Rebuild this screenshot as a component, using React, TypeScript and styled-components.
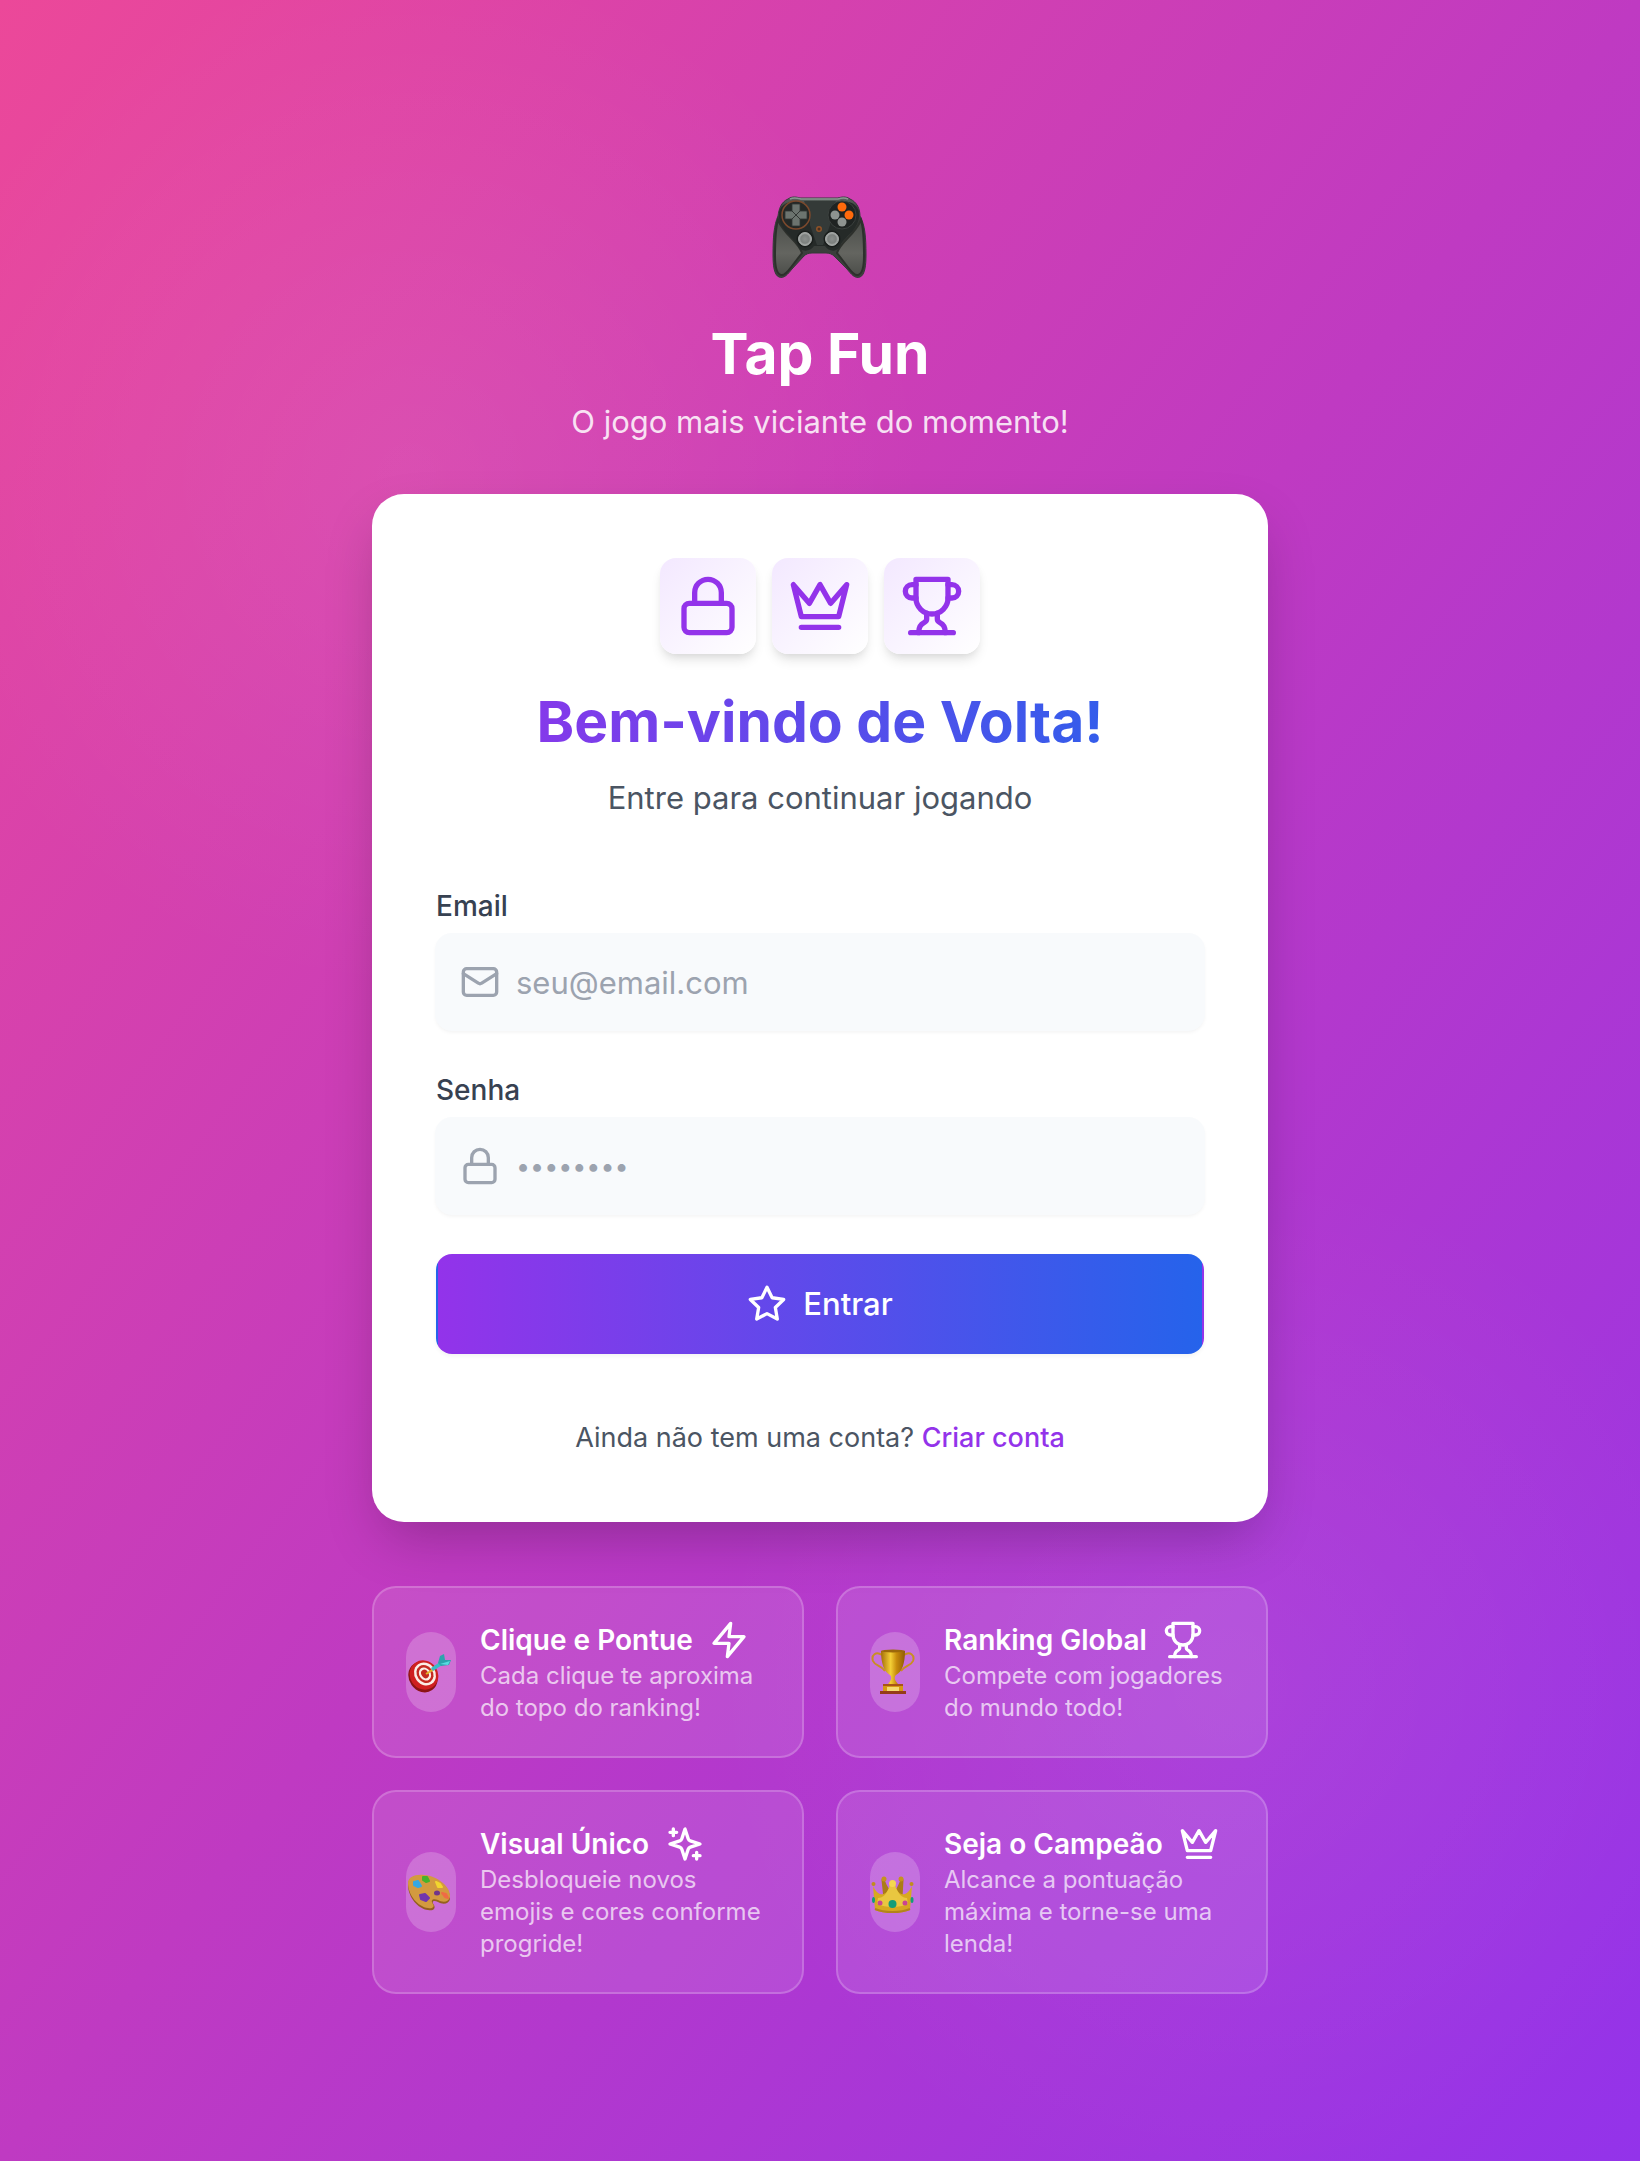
import React from "react";
import styled, { createGlobalStyle } from "styled-components";

const GlobalStyle = createGlobalStyle`
  *, *::before, *::after { box-sizing: border-box; }
  body { margin: 0; font-family: Inter, "Liberation Sans", sans-serif; }
  h1, h2, h3, p { margin: 0; }
`;

const Page = styled.main`
  min-height: 100vh;
  display: flex;
  align-items: center;
  justify-content: center;
  padding: 32px;
  background:
    radial-gradient(circle at 25% 22%, rgba(255, 255, 255, 0.07), transparent 520px),
    radial-gradient(circle at 75% 78%, rgba(255, 255, 255, 0.06), transparent 520px),
    linear-gradient(to bottom right, #ec4899, #bf3ac2 50%, #9333ea);
`;

const Column = styled.div`
  width: 100%;
  max-width: 896px;
`;

const Header = styled.header`
  display: flex;
  flex-direction: column;
  align-items: center;
  text-align: center;
  margin-bottom: 48px;
`;

const Mascot = styled.div`
  height: 135px;
  margin-bottom: 16px;
  padding-top: 4px;
  display: flex;
  align-items: center;
`;

const AppName = styled.h1`
  font-size: 57px;
  line-height: 72px;
  font-weight: 700;
  color: #fff;
  margin-bottom: 8px;
`;

const Tagline = styled.p`
  font-size: 31px;
  line-height: 48px;
  color: rgba(255, 255, 255, 0.85);
`;

const Card = styled.section`
  background: #fff;
  border-radius: 32px;
  padding: 64px;
  box-shadow: 0 24px 56px -12px rgba(0, 0, 0, 0.25);
`;

const CardHead = styled.div`
  display: flex;
  flex-direction: column;
  align-items: center;
  text-align: center;
  margin-bottom: 64px;
`;

const TileRow = styled.div`
  display: flex;
  gap: 16px;
  margin-bottom: 32px;
`;

const Tile = styled.div`
  padding: 16px;
  border-radius: 16px;
  line-height: 0;
  color: #9333ea;
  background: linear-gradient(to bottom right, #f3e8ff, #fff);
  box-shadow: 0 8px 12px -2px rgba(0, 0, 0, 0.1), 0 4px 8px -4px rgba(0, 0, 0, 0.1);
`;

const Welcome = styled.h2`
  font-size: 57px;
  line-height: 72px;
  font-weight: 700;
  color: transparent;
  width: 100%;
  background: linear-gradient(to right, #9333ea, #2563eb);
  background-clip: text;
  -webkit-background-clip: text;
  margin-bottom: 16px;
`;

const Lead = styled.p`
  font-size: 31px;
  line-height: 48px;
  color: #4b5563;
`;

const Form = styled.form`
  display: flex;
  flex-direction: column;
  gap: 40px;
`;

const Field = styled.div`
  display: flex;
  flex-direction: column;
  gap: 8px;
`;

const Label = styled.label`
  font-size: 28px;
  line-height: 40px;
  font-weight: 500;
  color: #374151;
`;

const InputBox = styled.div`
  height: 96px;
  display: flex;
  align-items: center;
  gap: 16px;
  padding: 0 24px;
  border-radius: 16px;
  color: #9ca3af;
  background: #f8fafc;
  box-shadow: 0 0 0 1px #f8fafc, 0 2px 4px rgba(0, 0, 0, 0.06);
`;

const Input = styled.input`
  flex: 1;
  min-width: 0;
  height: 100%;
  padding: 0;
  border: 0;
  outline: 0;
  background: transparent;
  font: 400 31px/48px Inter, "Liberation Sans", sans-serif;
  color: #111827;
  &::placeholder { color: #9ca3af; opacity: 1; }
  &[type="password"] { font-size: 25px; }
`;

const Submit = styled.button`
  height: 100px;
  display: flex;
  align-items: center;
  justify-content: center;
  gap: 16px;
  border: 2px solid transparent;
  border-radius: 16px;
  font: 500 31px/48px Inter, "Liberation Sans", sans-serif;
  color: #fff;
  cursor: pointer;
  background: linear-gradient(to right, #9333ea, #2563eb);
  box-shadow: 0 2px 4px rgba(0, 0, 0, 0.05);
`;

const SignUp = styled.p`
  margin-top: 64px;
  text-align: center;
  font-size: 27px;
  line-height: 40px;
  color: #4b5563;
`;

const SignUpLink = styled.a`
  font-weight: 500;
  color: #9333ea;
  text-decoration: none;
`;

const Features = styled.section`
  margin-top: 64px;
  display: grid;
  grid-template-columns: repeat(2, minmax(0, 1fr));
  gap: 32px;
`;

const Feature = styled.article`
  display: flex;
  align-items: center;
  gap: 24px;
  padding: 32px;
  border: 2px solid rgba(255, 255, 255, 0.2);
  border-radius: 24px;
  background: rgba(255, 255, 255, 0.1);
`;

const Pill = styled.div`
  flex: none;
  width: 50px;
  height: 80px;
  padding-right: 4px;
  border-radius: 25px;
  display: flex;
  align-items: center;
  justify-content: center;
  background: rgba(255, 255, 255, 0.2);
`;

const FeatureText = styled.div`
  flex: 1;
  min-width: 0;
`;

const FeatureTitle = styled.h3`
  display: flex;
  align-items: center;
  gap: 16px;
  font-size: 28px;
  line-height: 40px;
  font-weight: 600;
  white-space: nowrap;
  color: #fff;
`;

const FeatureBody = styled.p`
  font-size: 24px;
  line-height: 32px;
  color: rgba(255, 255, 255, 0.7);
`;

const Svg = styled.svg`
  flex: none;
  display: block;
`;

type IconName = "lock" | "crown" | "trophy" | "mail" | "star" | "zap" | "sparkles";

const shapes: Record<IconName, React.ReactNode> = {
  lock: (
    <>
      <rect x="3" y="11" width="18" height="11" rx="2" />
      <path d="M7 11V7a5 5 0 0 1 10 0v4" />
    </>
  ),
  crown: <path d="m2 4 3 12h14l3-12-6 7-4-7-4 7-6-7zm3 16h14" />,
  trophy: (
    <>
      <path d="M6 9H4.500a2.500 2.500 0 0 1 0-5H6" />
      <path d="M18 9h1.500a2.500 2.500 0 0 0 0-5H18" />
      <path d="M4 22h16" />
      <path d="M10 14.660V17c0 .55-.47.98-.97 1.210C7.850 18.750 7 20.240 7 22" />
      <path d="M14 14.660V17c0 .55.47.98.97 1.210C16.150 18.750 17 20.240 17 22" />
      <path d="M18 2H6v7a6 6 0 0 0 12 0V2Z" />
    </>
  ),
  mail: (
    <>
      <rect x="2" y="4" width="20" height="16" rx="2" />
      <path d="m22 7-8.970 5.700a1.940 1.940 0 0 1-2.060 0L2 7" />
    </>
  ),
  star: (
    <polygon points="12 2 15.090 8.260 22 9.270 17 14.140 18.180 21.020 12 17.770 5.820 21.020 7 14.140 2 9.270 8.910 8.260 12 2" />
  ),
  zap: <polygon points="13 2 3 14 12 14 11 22 21 10 12 10 13 2" />,
  sparkles: (
    <>
      <path d="m12 3-1.912 5.813a2 2 0 0 1-1.275 1.275L3 12l5.813 1.912a2 2 0 0 1 1.275 1.275L12 21l1.912-5.813a2 2 0 0 1 1.275-1.275L21 12l-5.813-1.912a2 2 0 0 1-1.275-1.275L12 3Z" />
      <path d="M5 3v4M19 17v4M3 5h4M17 19h4" />
    </>
  ),
};

const Icon = ({ name, size = 40 }: { name: IconName; size?: number }) => (
  <Svg
    width={size}
    height={size}
    viewBox="0 0 24 24"
    fill="none"
    stroke="currentColor"
    strokeWidth={2}
    strokeLinecap="round"
    strokeLinejoin="round"
    aria-hidden="true"
  >
    {shapes[name]}
  </Svg>
);

const Gamepad = () => (
  <Svg width="96" height="84" viewBox="0 0 96 84" role="img" aria-label="Controle">
    <defs>
      <linearGradient id="padBody" x1="0" y1="0" x2="0" y2="1">
        <stop offset="0" stopColor="#5d6561" />
        <stop offset="0.18" stopColor="#343937" />
        <stop offset="1" stopColor="#3f423e" />
      </linearGradient>
      <linearGradient id="padGrip" x1="0" y1="0" x2="0" y2="1">
        <stop offset="0" stopColor="#4a4d49" />
        <stop offset="0.6" stopColor="#646560" />
        <stop offset="1" stopColor="#4c4e4a" />
      </linearGradient>
      <radialGradient id="padStick">
        <stop offset="0" stopColor="#8b8f8d" />
        <stop offset="0.65" stopColor="#7c807e" />
        <stop offset="1" stopColor="#b5b8b6" />
      </radialGradient>
    </defs>
    <path d="M16 4C20 1 25 2 28 3H66C69 2 74 1 78 4C85 7 88 14 88 21C93 30 94 42 94 60C94 70 93 80 88 82C83 84 79 79 75 74L62 61C60 59 57 58 54 58H40C37 58 34 59 32 61L20 74C16 79 12 84 7 82C2 80 1 70 1 60C1 42 2 30 6 21C7 14 9 7 16 4Z" fill="url(#padBody)" stroke="#343a38" />
    <path d="M6 25C3 35 3 48 3 61C3 72 5 79 9 80C13 81 17 75 20 71L30 58C26 46 13 41 6 25Z" fill="url(#padGrip)" stroke="#2d302c" strokeWidth="2" />
    <path d="M89 25C92 35 92 48 92 61C92 72 90 79 86 80C82 81 78 75 75 71L65 58C69 46 82 41 89 25Z" fill="url(#padGrip)" stroke="#2d302c" strokeWidth="2" />
    <path d="M18 4C22 2 25 3 29 4H66C69 3 72 2 76 4" fill="none" stroke="#899690" strokeWidth="1.500" />
    <path d="M7 20C7 34 19 40 25 49C28 58 38 57 42 51H53C57 57 66 58 69 49C75 40 87 34 87 20C87 10 79 6 71 7C64 7 59 12 57 18L38 18C36 12 31 7 24 7C15 6 7 11 7 20Z" fill="#252a28" />
    <path d="M32 6H64L58 20V30L51 50H45L38 30V20Z" fill="#343a38" />
    <circle cx="24" cy="20" r="14" fill="#242826" stroke="#7b492d" strokeWidth="1.500" />
    <path d="M20 9H28V16L24 20L20 16ZM20 31H28V24L24 20L20 24ZM13 16V24H20L24 20L20 16ZM35 16V24H28L24 20L28 16Z" fill="#6c746f" stroke="#303532" strokeWidth="0.800" />
    <circle cx="70" cy="20" r="14" fill="#1f2322" stroke="#3b403e" />
    <circle cx="70" cy="12" r="4.500" fill="#ff6a0c" />
    <circle cx="77" cy="20" r="4.500" fill="#ff6a0c" />
    <circle cx="63" cy="20" r="4.500" fill="#8e9390" />
    <circle cx="70" cy="27" r="4.500" fill="#8e9390" />
    <circle cx="47" cy="34" r="3" fill="#8e5228" />
    <circle cx="47" cy="34" r="1.500" fill="#473021" />
    <circle cx="33" cy="44" r="8.500" fill="#1a1e1c" />
    <circle cx="33" cy="44" r="6.500" fill="url(#padStick)" stroke="#a0a4a2" />
    <circle cx="60" cy="44" r="8.500" fill="#1a1e1c" />
    <circle cx="60" cy="44" r="6.500" fill="url(#padStick)" stroke="#a0a4a2" />
  </Svg>
);

const Dart = () => (
  <Svg width="44" height="44" viewBox="0 -2 44 44" role="img" aria-label="Alvo">
    <ellipse cx="16" cy="25" rx="14" ry="16" transform="rotate(-35 16 25)" fill="#8c1414" />
    <ellipse cx="17" cy="23" rx="14" ry="15" transform="rotate(-35 17 23)" fill="#cf2020" />
    <ellipse cx="18" cy="22" rx="10.500" ry="12" transform="rotate(-35 18 22)" fill="#fbeee6" />
    <ellipse cx="18" cy="22" rx="8" ry="9.500" transform="rotate(-35 18 22)" fill="#c42a20" />
    <ellipse cx="18" cy="22" rx="5.700" ry="7" transform="rotate(-35 18 22)" fill="#fbeee6" />
    <ellipse cx="18" cy="22" rx="3.500" ry="4.500" transform="rotate(-35 18 22)" fill="#c42a20" />
    <path d="M19 22L27 17" stroke="#e3b528" strokeWidth="2" />
    <path d="M24 16L33 10L35 13L26 19Z" fill="#34bec6" />
    <path d="M31 11L33 4L37 2L38 8L44 8L42 13L34 14Z" fill="#2ba4ad" />
    <path d="M33 12L43 9L41 13Z" fill="#56dbe0" />
  </Svg>
);

const Cup = () => (
  <Svg width="44" height="46" viewBox="0 0 44 46" role="img" aria-label="Troféu">
    <defs>
      <linearGradient id="cupGold">
        <stop offset="0" stopColor="#a56d08" />
        <stop offset="0.4" stopColor="#f4cf36" />
        <stop offset="0.65" stopColor="#c78b0b" />
        <stop offset="1" stopColor="#8f5b05" />
      </linearGradient>
    </defs>
    <path d="M11 6C5 2 0 6 2 12C4 17 10 16 14 22M33 6C39 2 44 6 42 12C40 17 34 16 30 22" fill="none" stroke="#c98f20" strokeWidth="2" />
    <path d="M10 2H34C34 14 31 23 25 26C23 28 23 31 28 36H16C21 31 21 28 19 26C13 23 10 14 10 2Z" fill="url(#cupGold)" />
    <ellipse cx="22" cy="2" rx="12" ry="1.500" fill="#9c680a" />
    <path d="M12 36H32V43H12Z" fill="#d69a15" />
    <path d="M16 38H28V42H16Z" fill="#f5db72" />
    <path d="M9 42H35V45H9Z" fill="#953c18" />
    <path d="M12 35H32V37H12Z" fill="#a95418" />
  </Svg>
);

const Palette = () => (
  <Svg width="44" height="38" viewBox="0 0 44 38" role="img" aria-label="Paleta">
    <path d="M1 12C1 5 8 2 17 3C31 4 44 15 43 26C42 31 36 32 31 29C27 27 24 28 27 32C29 36 26 38 21 37C11 36 1 24 1 12Z" fill="#94601f" />
    <path d="M1 10C1 4 8 1 17 2C31 3 44 14 43 24C42 29 36 30 31 27C26 25 23 27 26 31C28 34 25 36 21 35C11 34 1 22 1 10Z" fill="#d39a3f" />
    <ellipse cx="30" cy="20" rx="3" ry="2.500" fill="#70348a" />
    <path d="M7 9L11 8L14 13L11 14L7 12Z" fill="#35a8e0" stroke="#35a8e0" strokeWidth="2" strokeLinejoin="round" />
    <path d="M16 4L20 4L22 8L19 9L16 7Z" fill="#45b42c" stroke="#45b42c" strokeWidth="2" strokeLinejoin="round" />
    <path d="M29 9L33 11L35 14L31 14Z" fill="#f2d62e" stroke="#f2d62e" strokeWidth="2" strokeLinejoin="round" />
    <path d="M35 20L39 21L41 25L38 24Z" fill="#ef6a45" stroke="#ef6a45" strokeWidth="2" strokeLinejoin="round" />
    <path d="M13 22L18 21L22 25L19 28L14 26Z" fill="#7136ad" stroke="#7136ad" strokeWidth="2" strokeLinejoin="round" />
  </Svg>
);

const RoyalCrown = () => (
  <Svg width="44" height="44" viewBox="0 -6 44 44" role="img" aria-label="Coroa">
    <path d="M12 4L14 22H30L31 4C28 12 25 17 22 18C18 17 15 12 12 4Z" fill="#ab7c18" stroke="#ab7c18" strokeWidth="3" strokeLinejoin="round" />
    <circle cx="13" cy="3" r="2.500" fill="#c4931e" />
    <circle cx="30" cy="3" r="2.500" fill="#c4931e" />
    <path d="M2 10C6 19 14 23 19 10H24C29 23 37 19 41 10L39 34C30 38 12 38 4 34Z" fill="#d7a91f" />
    <path d="M19 9H24C27 18 31 22 36 22L37 28C28 32 15 32 6 28L7 22C12 22 16 18 19 9Z" fill="#e9c740" />
    <circle cx="2.500" cy="8" r="2" fill="#c08e1d" />
    <circle cx="40.500" cy="8" r="2" fill="#c08e1d" />
    <circle cx="21.500" cy="7.500" r="3.500" fill="#f4d850" />
    <path d="M4 33C13 37 30 37 39 33" fill="none" stroke="#b2831a" strokeWidth="2" />
    <circle cx="21.500" cy="28" r="4" fill="#139d78" />
    <circle cx="9" cy="27" r="2.500" fill="#c94591" />
    <circle cx="34" cy="27" r="2.500" fill="#c94591" />
    <ellipse cx="2.500" cy="24" rx="1.500" ry="3" fill="#139d78" />
    <ellipse cx="41" cy="24" rx="1.500" ry="3" fill="#139d78" />
  </Svg>
);

const features: { title: string; body: string; icon: IconName; art: React.ReactNode }[] = [
  { title: "Clique e Pontue", body: "Cada clique te aproxima do topo do ranking!", icon: "zap", art: <Dart /> },
  { title: "Ranking Global", body: "Compete com jogadores do mundo todo!", icon: "trophy", art: <Cup /> },
  { title: "Visual Único", body: "Desbloqueie novos emojis e cores conforme progride!", icon: "sparkles", art: <Palette /> },
  { title: "Seja o Campeão", body: "Alcance a pontuação máxima e torne-se uma lenda!", icon: "crown", art: <RoyalCrown /> },
];

const badges: IconName[] = ["lock", "crown", "trophy"];

export default function App() {
  return (
    <>
      <GlobalStyle />
      <Page>
        <Column>
          <Header>
            <Mascot><Gamepad /></Mascot>
            <AppName>Tap Fun</AppName>
            <Tagline>O jogo mais viciante do momento!</Tagline>
          </Header>
          <Card>
            <CardHead>
              <TileRow>
                {badges.map((name) => (
                  <Tile key={name}><Icon name={name} size={64} /></Tile>
                ))}
              </TileRow>
              <Welcome>Bem-vindo de Volta!</Welcome>
              <Lead>Entre para continuar jogando</Lead>
            </CardHead>
            <Form onSubmit={(e) => e.preventDefault()}>
              <Field>
                <Label htmlFor="email">Email</Label>
                <InputBox>
                  <Icon name="mail" />
                  <Input id="email" type="email" placeholder="seu@email.com" />
                </InputBox>
              </Field>
              <Field>
                <Label htmlFor="senha">Senha</Label>
                <InputBox>
                  <Icon name="lock" />
                  <Input id="senha" type="password" placeholder="••••••••" />
                </InputBox>
              </Field>
              <Submit type="submit"><Icon name="star" />Entrar</Submit>
            </Form>
            <SignUp>
              Ainda não tem uma conta? <SignUpLink href="#criar-conta">Criar conta</SignUpLink>
            </SignUp>
          </Card>
          <Features>
            {features.map((f) => (
              <Feature key={f.title}>
                <Pill>{f.art}</Pill>
                <FeatureText>
                  <FeatureTitle>{f.title}<Icon name={f.icon} /></FeatureTitle>
                  <FeatureBody>{f.body}</FeatureBody>
                </FeatureText>
              </Feature>
            ))}
          </Features>
        </Column>
      </Page>
    </>
  );
}
